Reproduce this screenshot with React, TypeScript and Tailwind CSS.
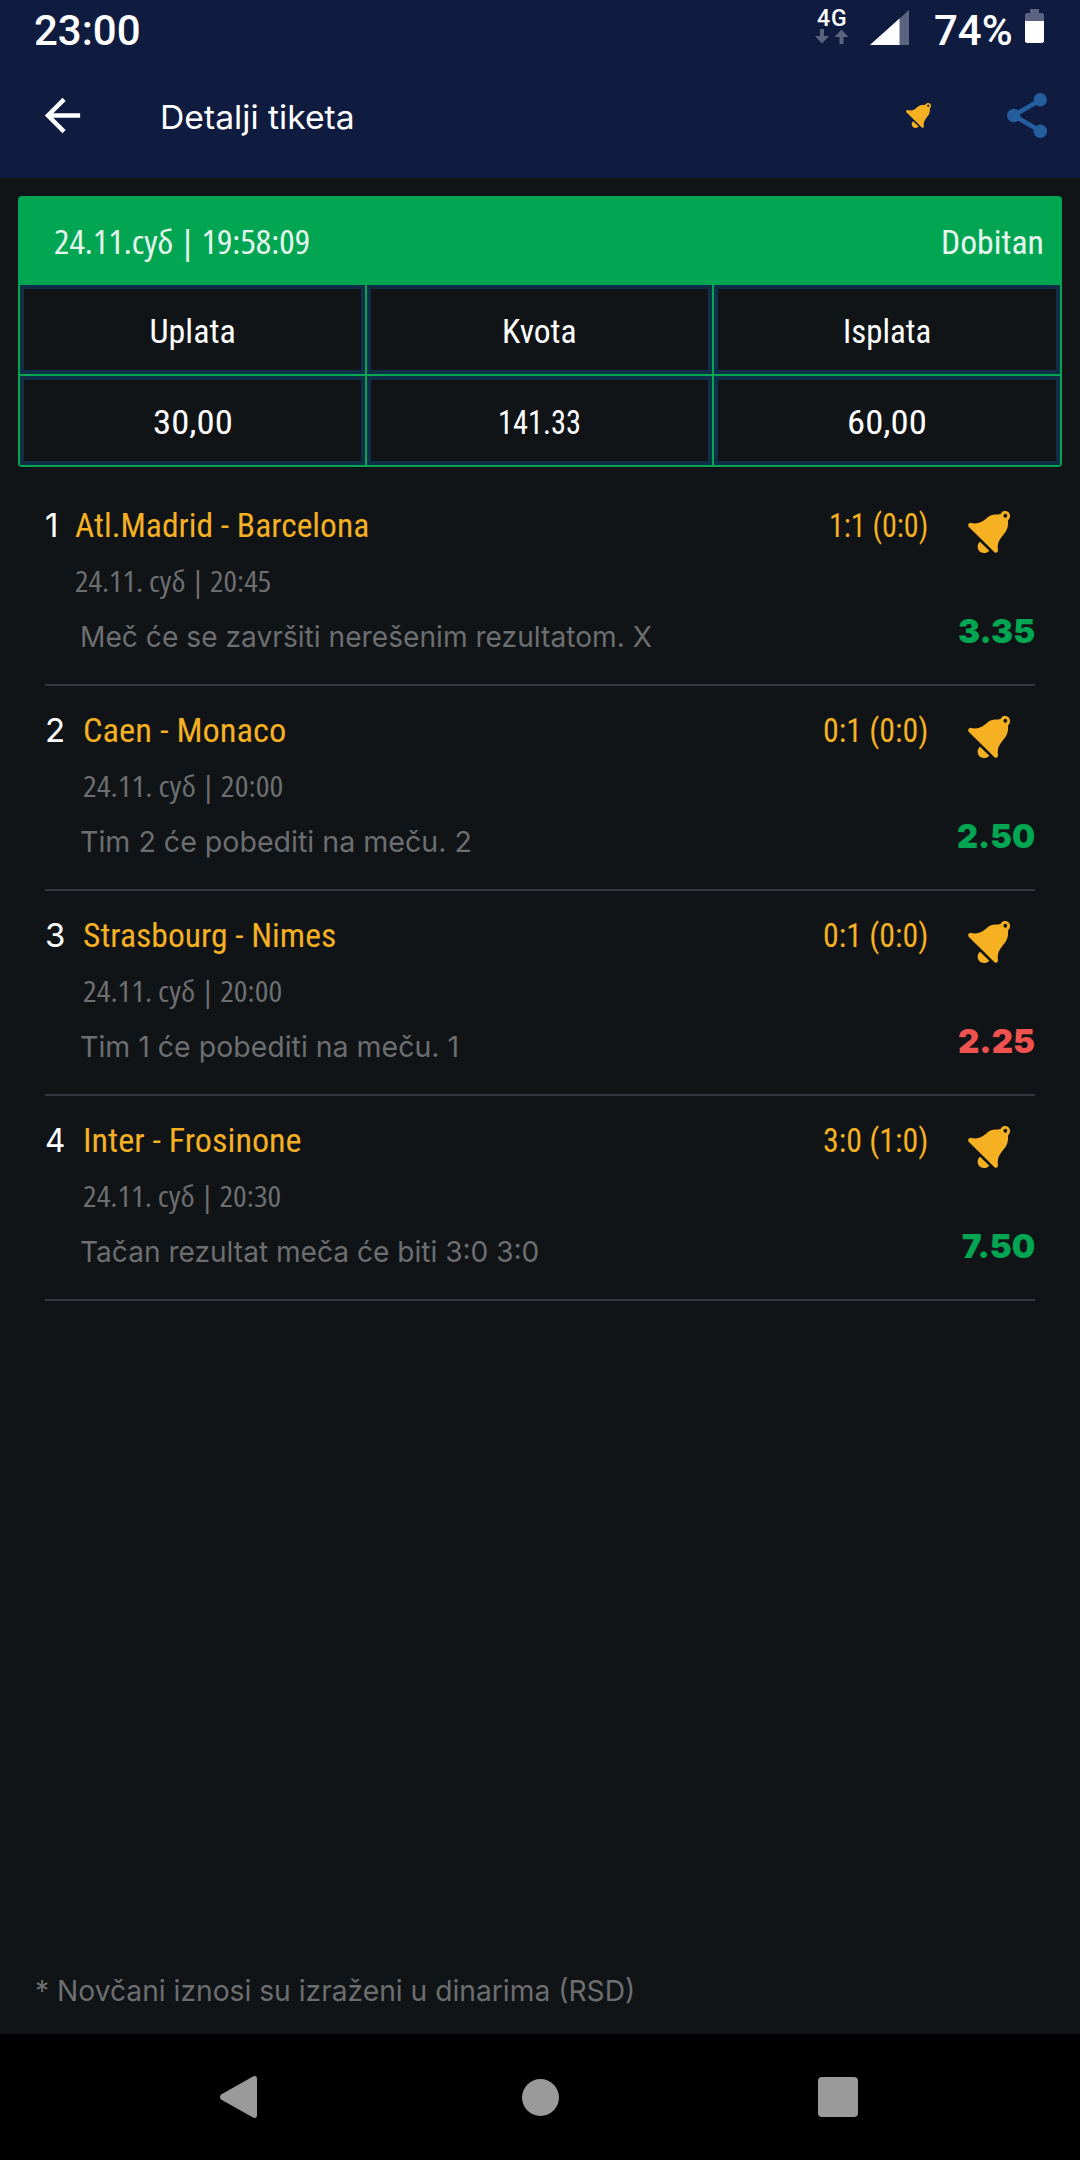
import { useLayoutEffect, useRef, useState } from "react";
import type { ReactNode } from "react";
import clsx from "clsx";

const summary = [
  { label: "Uplata", labelWidth: "w-[86px]", value: "30,00", valueWidth: "w-[80px]" },
  { label: "Kvota", labelWidth: "w-[75px]", value: "141.33", valueWidth: "w-[83px]" },
  { label: "Isplata", labelWidth: "w-[88px]", value: "60,00", valueWidth: "w-[80px]" }
];

const bets = [
  {
    teams: "Atl.Madrid - Barcelona",
    teamsWidth: "w-[294px]",
    indent: "w-[30px]",
    numberWidth: "w-[13px]",
    date: "24.11. суб | 20:45",
    dateWidth: "w-[196px]",
    tip: "Meč će se završiti nerešenim rezultatom. X",
    tipWidth: "w-[572px]",
    score: "1:1 (0:0)",
    scoreWidth: "w-[99px]",
    odds: "3.35",
    oddsWidth: "w-[77px]",
    won: true
  },
  {
    teams: "Caen - Monaco",
    teamsWidth: "w-[203px]",
    indent: "w-[38px]",
    numberWidth: "w-[20px]",
    date: "24.11. суб | 20:00",
    dateWidth: "w-[200px]",
    tip: "Tim 2 će pobediti na meču. 2",
    tipWidth: "w-[392px]",
    score: "0:1 (0:0)",
    scoreWidth: "w-[105px]",
    odds: "2.50",
    oddsWidth: "w-[78px]",
    won: true
  },
  {
    teams: "Strasbourg - Nimes",
    teamsWidth: "w-[253px]",
    indent: "w-[38px]",
    numberWidth: "w-[20px]",
    date: "24.11. суб | 20:00",
    dateWidth: "w-[199px]",
    tip: "Tim 1 će pobediti na meču. 1",
    tipWidth: "w-[379px]",
    score: "0:1 (0:0)",
    scoreWidth: "w-[105px]",
    odds: "2.25",
    oddsWidth: "w-[77px]",
    won: false
  },
  {
    teams: "Inter - Frosinone",
    teamsWidth: "w-[219px]",
    indent: "w-[38px]",
    numberWidth: "w-[20px]",
    date: "24.11. суб | 20:30",
    dateWidth: "w-[198px]",
    tip: "Tačan rezultat meča će biti 3:0 3:0",
    tipWidth: "w-[459px]",
    score: "3:0 (1:0)",
    scoreWidth: "w-[105px]",
    odds: "7.50",
    oddsWidth: "w-[73px]",
    won: true
  }
];

// Squeezes or stretches one line of text to the width of its box.
function Fit({ className, children }: { className?: string; children: ReactNode }) {
  const box = useRef<HTMLSpanElement>(null);
  const text = useRef<HTMLSpanElement>(null);
  const [scale, setScale] = useState(1);

  useLayoutEffect(() => {
    if (box.current && text.current) {
      setScale(box.current.clientWidth / text.current.offsetWidth);
    }
  }, [children]);

  return (
    <span ref={box} className={clsx("block shrink-0 whitespace-nowrap", className)}>
      <span ref={text} className="inline-block origin-left" style={{ transform: `scaleX(${scale})` }}>
        {children}
      </span>
    </span>
  );
}

function Bell({ className }: { className?: string }) {
  return (
    <svg viewBox="0 0 126 126" className={clsx("shrink-0 text-[#f6b123]", className)} fill="currentColor" aria-hidden="true">
      <path
        fillRule="evenodd"
        d="M2 47Q-2 41 4 37Q7 34 13 37C38 40 48 28 63 16C76 7 86 13 99 8C103 -3 120 -3 125 9C128 18 124 24 120 28C122 54 112 65 103 75C92 88 87 101 90 117Q90 127 81 125ZM112 8a5.500 6 0 1 0 .01 0Z"
      />
      <path d="M36 92L64 119C54 130 37 127 31 116C27 107 29 98 36 92Z" />
    </svg>
  );
}

function StatusBar() {
  return (
    <div className="flex h-[60px] items-center pr-9 pl-[34px] font-['Roboto'] text-[42px] leading-[60px] font-medium">
      <Fit className="mt-[2px] w-[107px]">23:00</Fit>
      <div className="ml-auto flex h-full w-[34px] flex-col pt-2">
        <Fit className="ml-[2px] h-[21px] w-[31px] text-[23px] leading-[22px] tracking-[1px]">4G</Fit>
        <svg viewBox="0 0 34 15" className="h-[15px] w-[34px]" fill="#5a6480" aria-hidden="true">
          <path d="M5 0h4v7h5L7 14.500 0 7h5zM24.500 15h4V8h5L26.500.5 19.500 8h5z" />
        </svg>
      </div>
      <svg viewBox="0 0 39 35" className="mb-[6px] ml-[21px] h-[35px] w-[39px]" aria-hidden="true">
        <path d="M0 35L39 0V35Z" fill="#5a6480" />
        <path d="M0 35L29.500 8.500V35Z" fill="#fff" />
      </svg>
      <Fit className="mt-[2px] ml-[25px] w-[79px]">74%</Fit>
      <svg viewBox="0 0 19 34" className="mb-2 ml-[12px] h-[34px] w-[19px]" aria-hidden="true">
        <path d="M5 0h9v4h3.500L19 5.500V12H0V5.500L1.500 4H5z" fill="#5a6480" />
        <path d="M0 12h19v20.500L17.500 34h-16L0 32.500z" fill="#fff" />
      </svg>
    </div>
  );
}

function AppBar() {
  return (
    <div className="flex h-[118px] items-center pr-[33px] pb-[7px] pl-9">
      <svg viewBox="0 0 24 24" className="size-[53px]" fill="currentColor" aria-hidden="true">
        <path d="M20 11H7.830l5.590-5.590L12 4l-8 8 8 8 1.410-1.410L7.830 13H20v-2z" />
      </svg>
      <h1 className="mt-[2px] ml-[71px] text-[33px] leading-10">
        <Fit className="w-[195px]">Detalji tiketa</Fit>
      </h1>
      <Bell className="ml-auto size-[25px]" />
      <svg viewBox="0 0 40 45" className="ml-[76px] h-[45px] w-[40px]" fill="#255e9e" aria-hidden="true">
        <path d="M33.300 7L6.700 22.500L33.300 38" fill="none" stroke="#255e9e" strokeWidth="4.500" />
        <circle cx="6.700" cy="22.500" r="6.700" />
        <circle cx="33.300" cy="6.700" r="6.700" />
        <circle cx="33.300" cy="38.300" r="6.700" />
      </svg>
    </div>
  );
}

function TicketSummary() {
  return (
    <section className="mx-[18px] mt-[18px] overflow-hidden rounded-[4px] bg-[#02a652] pb-[2px] font-['Roboto'] text-[34px] font-stretch-condensed">
      <div className="flex h-[89px] items-center justify-between pt-[3px] pr-[18px] pl-[36px] text-white/90">
        <Fit className="w-[256px] font-['Open_Sans'] text-[33px]">24.11.суб | 19:58:09</Fit>
        <Fit className="w-[103px]">Dobitan</Fit>
      </div>
      <div className="grid grid-cols-[345px_345px_346px] gap-[2px] px-[2px]">
        {summary.map((item) => (
          <div key={item.label} className="flex h-[89px] items-center justify-center border-4 border-[#102f46] bg-[#101417] pt-[3px]">
            <Fit className={item.labelWidth}>{item.label}</Fit>
          </div>
        ))}
        {summary.map((item) => (
          <div key={item.value} className="flex h-[89px] items-center justify-center border-4 border-[#102f46] bg-[#101417] pt-[3px]">
            <Fit className={item.valueWidth}>{item.value}</Fit>
          </div>
        ))}
      </div>
    </section>
  );
}

function BetRow({ bet, number }: { bet: (typeof bets)[number]; number: number }) {
  return (
    <li className="flex h-[205px] justify-between border-b-2 border-[#34373d] pt-[17px]">
      <div>
        <div className="flex h-[54px] items-center pt-[2px] text-[33px]">
          <span className={clsx("shrink-0", bet.indent)}>
            <Fit className={bet.numberWidth}>{number}</Fit>
          </span>
          <Fit className={clsx("mb-[2px] font-['Roboto'] text-[34px] text-[#f6b123] font-stretch-condensed", bet.teamsWidth)}>
            {bet.teams}
          </Fit>
        </div>
        <div className="mt-[14px] flex h-[30px] font-['Open_Sans'] text-[29px] leading-[30px] text-[#6d6e70] font-stretch-condensed">
          <span className={clsx("shrink-0", bet.indent)} />
          <Fit className={bet.dateWidth}>{bet.date}</Fit>
        </div>
        <div className="mt-[21px] ml-[35px] h-10 text-[29px] leading-10 text-[#6d6e70]">
          <Fit className={bet.tipWidth}>{bet.tip}</Fit>
        </div>
      </div>
      <div className="flex flex-col items-end">
        <div className="flex h-[54px] items-center pr-[25px] text-[34px] text-[#f6b123]">
          <Fit className={clsx("font-['Roboto'] font-stretch-condensed", bet.scoreWidth)}>{bet.score}</Fit>
          <Bell className="mt-[14px] ml-[40px] size-[42px]" />
        </div>
        <div
          className={clsx(
            "mt-[59px] h-10 text-[33px] leading-10 font-black",
            bet.won ? "text-[#02a652]" : "text-[#f0524f]"
          )}
        >
          <Fit className={bet.oddsWidth}>{bet.odds}</Fit>
        </div>
      </div>
    </li>
  );
}

function NavigationBar() {
  return (
    <nav className="flex h-[126px] items-center bg-black pl-[220px]">
      <svg viewBox="0 0 37 42" className="h-[42px] w-[37px]" fill="#9a9a9a" aria-hidden="true">
        <path d="M1 18.500L33 .5Q37-1 37 3V39Q37 43 33 41.500L1 23.500Q-1 21 1 18.500Z" />
      </svg>
      <span className="ml-[265px] size-[37px] rounded-full bg-[#9a9a9a]" />
      <span className="ml-[259px] size-10 rounded-[4px] bg-[#9a9a9a]" />
    </nav>
  );
}

export default function App() {
  return (
    <div
      lang="sr"
      className="flex h-[2160px] w-[1080px] flex-col overflow-hidden bg-[#101417] font-['Inter','Open_Sans',sans-serif] text-white"
    >
      <header className="h-[178px] bg-[#0f1c40]">
        <StatusBar />
        <AppBar />
      </header>
      <main className="flex-1">
        <TicketSummary />
        <ul className="mx-[45px] mt-[14px]">
          {bets.map((bet, index) => (
            <BetRow key={bet.teams} bet={bet} number={index + 1} />
          ))}
        </ul>
      </main>
      <footer className="mb-[23px] ml-[35px] h-10 text-[29px] leading-10 text-[#6d6e70]">
        <Fit className="w-[600px]">* Novčani iznosi su izraženi u dinarima (RSD)</Fit>
      </footer>
      <NavigationBar />
    </div>
  );
}
